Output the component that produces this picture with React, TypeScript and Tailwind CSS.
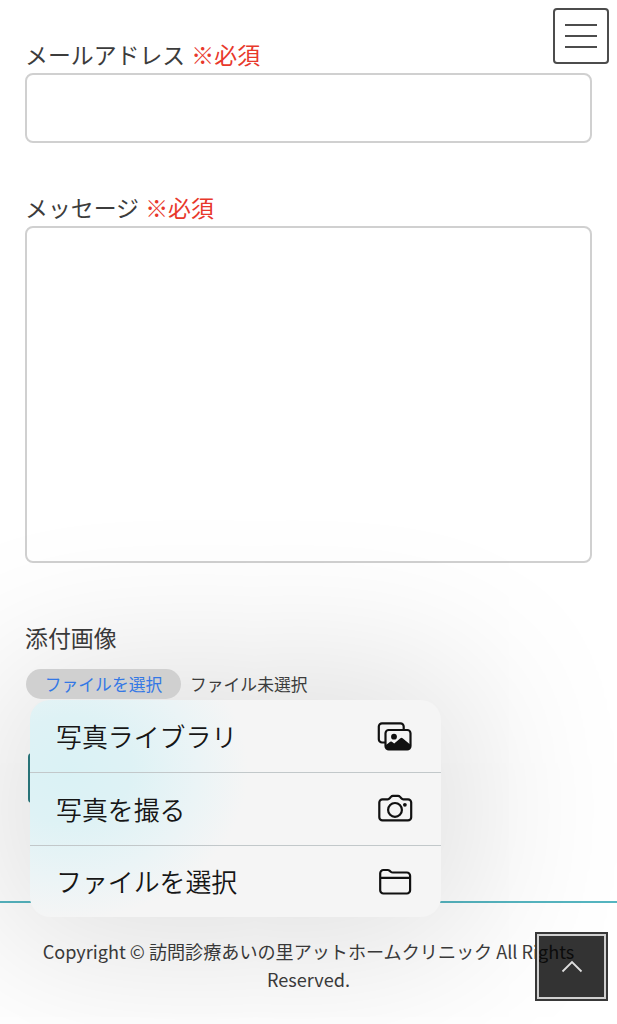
import type { ReactNode } from "react";

type FieldLabelProps = {
  children: ReactNode;
  required?: boolean;
};

function FieldLabel({ children, required }: FieldLabelProps) {
  return (
    <label className="block h-9 text-[22.9px] leading-9 text-[#3c3c3c]">
      {children}
      {required && <span className="ml-px text-[#e8382b]"> ※必須</span>}
    </label>
  );
}

function PhotoLibraryIcon() {
  return (
    <svg width="36" height="30" viewBox="0 0 36 30" fill="none">
      <path
        d="M8 21.500H5a3.200 3.200 0 0 1-3.200-3.200V5.500A3.200 3.200 0 0 1 5 2.300h18.500a3.200 3.200 0 0 1 3.200 3.200v2.500"
        stroke="#111"
        strokeWidth="2.200"
      />
      <rect x="8.500" y="9" width="25" height="19.300" rx="3.200" stroke="#111" strokeWidth="2.200" />
      <circle cx="17" cy="15.700" r="2.900" fill="#111" />
      <path
        d="M9 24l4.200-3.300q.9-.6 1.700 0l2.300 1.800 6.200-5.200q1.100-.9 2.200 0l7.900 6.500V25.500a3 3 0 0 1-3 3H12a3 3 0 0 1-3-3z"
        fill="#111"
      />
    </svg>
  );
}

function CameraIcon() {
  return (
    <svg width="36" height="30" viewBox="0 0 36 30" fill="none" stroke="#111" strokeWidth="2.200">
      <path d="M5.500 5.300h5.200c.9 0 1.400-.3 2-1l1.200-1.400c.6-.7 1.200-1 2.100-1h5c.9 0 1.500.3 2.100 1l1.200 1.400c.6.700 1.100 1 2 1h4.700a3.200 3.200 0 0 1 3.200 3.200v14.700a3.200 3.200 0 0 1-3.200 3.200H5.500a3.200 3.200 0 0 1-3.200-3.200V8.500a3.200 3.200 0 0 1 3.200-3.200z" />
      <circle cx="18" cy="15.900" r="6.900" />
      <circle cx="27.900" cy="10.800" r="1.900" fill="#111" stroke="none" />
    </svg>
  );
}

function FolderIcon() {
  return (
    <svg width="36" height="30" viewBox="0 0 36 30" fill="none" stroke="#111" strokeWidth="2.200">
      <path d="M3.200 6.200A3.200 3.200 0 0 1 6.400 3h4.200c1 0 1.500.3 2.200.9l.9.800c.7.600 1.200.8 2.200.8h14a3.200 3.200 0 0 1 3.200 3.200v14.600a3.200 3.200 0 0 1-3.200 3.200H6.400a3.200 3.200 0 0 1-3.200-3.200z" />
      <path d="M3.200 10.900h29.900" />
    </svg>
  );
}

const menuItems = [
  { label: "写真ライブラリ", icon: <PhotoLibraryIcon /> },
  { label: "写真を撮る", icon: <CameraIcon /> },
  { label: "ファイルを選択", icon: <FolderIcon /> },
];

function FilePickerMenu() {
  return (
    <ul className="absolute top-[31px] left-[5px] z-10 w-[411px] overflow-hidden rounded-[20px] bg-[#f5f5f5] bg-[radial-gradient(ellipse_180px_150px_at_38px_70px,#daf2f5_0%,#def2f5_35%,#ebf4f6_72%,#f5f5f500_100%)] shadow-[0_0_160px_35px_rgba(0,0,0,0.125)]">
      {menuItems.map((item) => (
        <li
          key={item.label}
          className="flex h-[73px] items-center justify-between border-b border-[#c2c8ca] pr-7 pl-[26px] text-[25.9px] font-[350] text-[#161616] last:h-[71px] last:border-b-0"
        >
          <span>{item.label}</span>
          {item.icon}
        </li>
      ))}
    </ul>
  );
}

export default function App() {
  return (
    <div className="relative h-[1024px] w-full overflow-hidden bg-white font-['Noto_Sans_CJK_JP',sans-serif] text-[#3c3c3c]">
      <button
        aria-label="メニュー"
        className="absolute top-2 right-2 flex h-14 w-14 flex-col items-center justify-center gap-[9px] rounded-[4px] border-2 border-[#4c4c4c] bg-white"
      >
        <span className="h-0.5 w-8 bg-[#4c4c4c]" />
        <span className="h-0.5 w-8 bg-[#4c4c4c]" />
        <span className="h-0.5 w-8 bg-[#4c4c4c]" />
      </button>

      <form className="h-[901px] px-[25px] pt-9">
        <FieldLabel required>メールアドレス</FieldLabel>
        <input className="mt-px block h-[70px] w-[567px] rounded-lg border-2 border-[#d0d0d0]" />

        <div className="mt-[46px]">
          <FieldLabel required>メッセージ</FieldLabel>
          <textarea className="mt-px block h-[337px] w-[567px] resize-none rounded-lg border-2 border-[#d0d0d0]" />
        </div>

        <div className="mt-14">
          <FieldLabel>添付画像</FieldLabel>
          <div className="relative mt-3.5 flex h-[30px] items-center text-[16.8px]">
            <button
              type="button"
              className="relative z-20 ml-px h-[30px] w-[155px] rounded-full bg-[#d0d0d0] pt-px text-[#3478e5]"
            >
              ファイルを選択
            </button>
            <span className="relative z-20 ml-[9px] pt-px">ファイル未選択</span>
            <FilePickerMenu />
          </div>
        </div>

        <div className="mt-[54px] ml-[3px] h-[50px] w-[180px] rounded-[4px] bg-[#2c7c81]" />
      </form>

      <footer className="border-t-2 border-[#55b5c0] px-6 pt-[34px] text-center text-[18.1px] leading-7">
        Copyright © 訪問診療あいの里アットホームクリニック All Rights Reserved.
      </footer>

      <button
        aria-label="ページの先頭へ"
        className="absolute right-[9px] bottom-[23px] z-20 flex h-[69px] w-[73px] items-center justify-center border-2 border-[#383838] bg-black/80 p-0 outline-2 -outline-offset-4 outline-[#d0d0d0]"
      >
        <svg width="22" height="13" viewBox="0 0 22 13" fill="none" stroke="#dedede" strokeWidth="1.800">
          <path d="M1.500 11.500L11 2l9.500 9.500" />
        </svg>
      </button>
    </div>
  );
}
